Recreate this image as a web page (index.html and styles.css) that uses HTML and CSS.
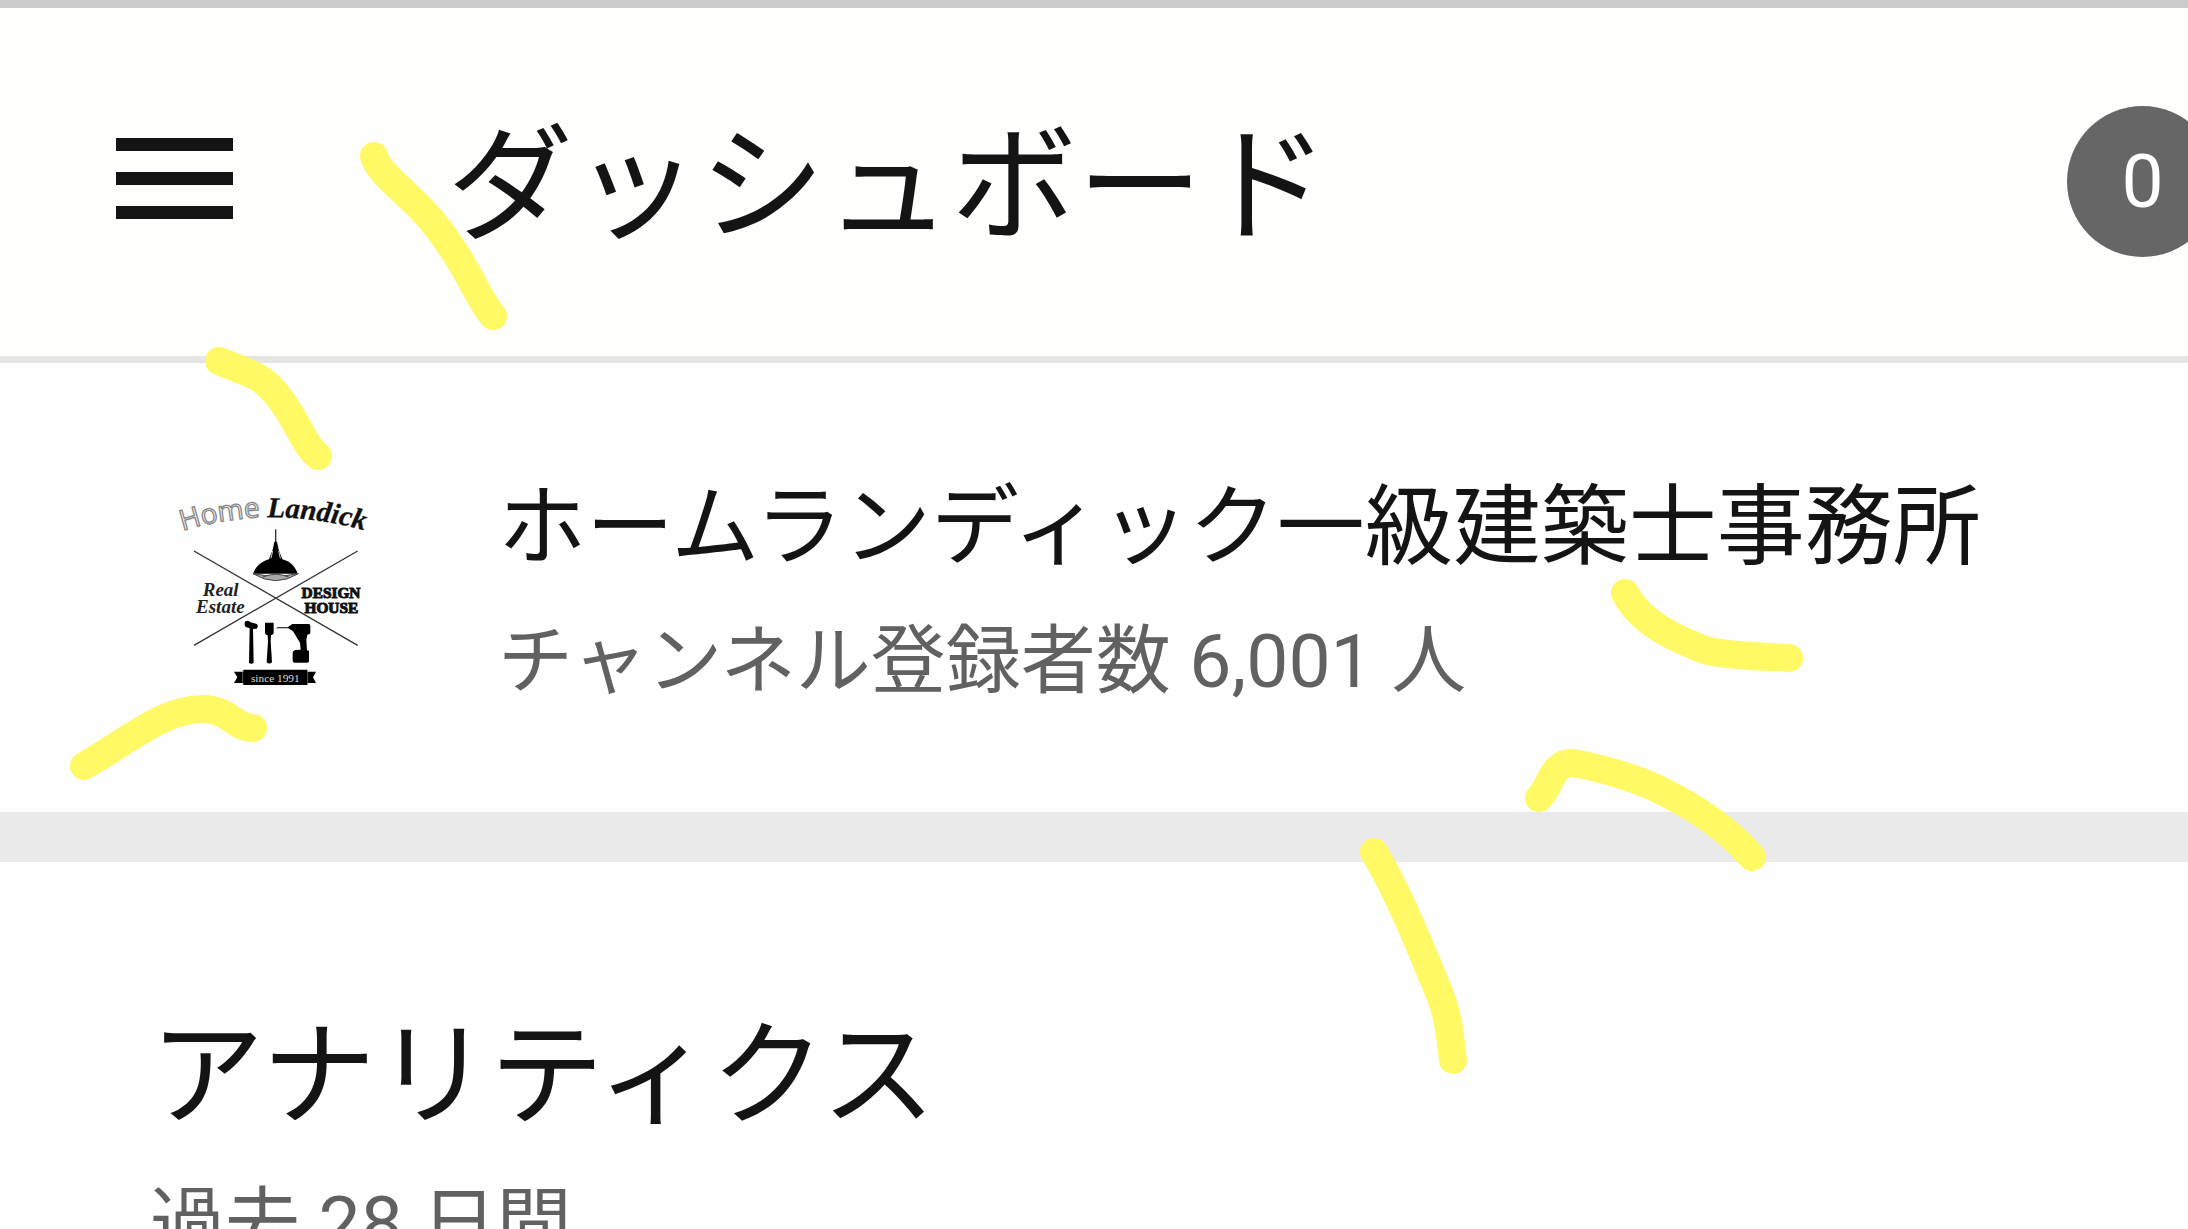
FILE: index.html
```
<!DOCTYPE html>
<html lang="ja">
<head>
    <meta charset="UTF-8">
    <meta name="viewport" content="width=device-width, initial-scale=1.0">
    <title>ダッシュボード</title>
    <link rel="stylesheet" href="styles.css">
</head>
<body>
    <header class="header">
        <button class="menu" aria-label="メニュー">
            <span class="bar"></span>
            <span class="bar"></span>
            <span class="bar"></span>
        </button>
        <h1 class="title">ダッシュボード</h1>
        <button class="badge">0</button>
    </header>

    <main>
        <section class="channel">
            <svg class="logo" viewBox="0 0 690 738" role="img" aria-label="Home Landick">
                <defs>
                    <path id="homeArc" d="M68 180 Q180 143 320 138"/>
                    <path id="landickArc" d="M322 139 Q470 136 650 188"/>
                </defs>
                <text class="logo-home"><textPath href="#homeArc">Home</textPath></text>
                <text class="logo-landick"><textPath href="#landickArc">Landick</textPath></text>

                <!-- cross -->
                <path class="line" d="M102 240 L593 523 M593 240 L102 523"/>

                <!-- lamp -->
                <path class="line" d="M347 175 V225"/>
                <path d="M343 212 h8 l5 24 11 29 c24 6 39 22 46 43 h-134 c8 -21 24 -36 48 -43 l11 -29z"/>
                <path class="lamp-gap" d="M338 240 l-5 22 M356 240 l5 22"/>
                <path class="lamp-rim" d="M279 308 Q347 350 415 308 Q347 322 279 308z"/>
                <path class="lamp-rim" d="M308 318 Q347 302 386 318"/>

                <text class="logo-script" x="182" y="374">Real</text>
                <text class="logo-script" x="181" y="426">Estate</text>
                <text class="logo-block" x="513" y="382">DESIGN</text>
                <text class="logo-block" x="514" y="425">HOUSE</text>

                <!-- hammer, brush, drill -->
                <path d="M256 451 q8 -5 16 3 l19 5 q5 8 -1 14 l-11 1 2 102 q-7 5 -14 0 l2 -104 -12 -4 q-6 -8 -1 -17z"/>
                <path d="M315 455 h26 v32 q-2 5 -8 6 l-1 18 4 63 q-8 7 -16 0 l4 -63 -1 -18 q-7 -1 -8 -6z"/>
                <path d="M353 469 h30 l14 -10 h49 q5 0 5 6 v20 q0 5 -9 6 l-3 16 2 30 6 3 v30 q0 5 -6 5 h-37 q-6 0 -6 -6 v-23 q0 -7 8 -9 l16 -1 -2 -21 -21 -34 -14 -9 h-37z"/>

                <!-- ribbon -->
                <path d="M222 602 h28 v-6 h192 v6 h26 l-9 17 9 17 h-26 v6 h-192 v-6 h-28 l10 -17z"/>
                <path class="ribbon-fold" d="M248 598 v42 M443 598 v42"/>
                <text class="logo-since" x="346" y="632">since 1991</text>
            </svg>
            <div class="channel-text">
                <h2 class="channel-name">ホームランディック一級建築士事務所</h2>
                <p class="sub">チャンネル登録者数 6,001 人</p>
            </div>
        </section>

        <section class="analytics">
            <h2 class="analytics-title">アナリティクス</h2>
            <p class="sub">過去 28 日間</p>
        </section>
    </main>

    <!-- marker strokes drawn over the page -->
    <svg class="marker" viewBox="0 0 2188 1229" aria-hidden="true">
        <path d="M374 156 C380 176 408 192 433 222 C467 264 476 296 493 316"/>
        <path d="M219 361 C248 373 262 375 278 396 C302 428 302 442 318 456"/>
        <path d="M84 766 C135 736 165 709 203 709 C229 709 236 729 253 728"/>
        <path d="M1625 593 C1641 624 1678 640 1708 651 C1730 656 1760 656 1789 658"/>
        <path d="M1539 798 C1552 784 1552 762 1573 763 C1603 768 1640 780 1660 790 C1705 812 1733 835 1752 857"/>
        <path d="M1374 852 C1398 892 1420 946 1440 995 C1449 1018 1450 1037 1453 1060"/>
    </svg>
</body>
</html>
```
FILE: styles.css
```
* {
    box-sizing: border-box;
}
body {
    position: relative;
    height: 100vh;
    margin: 0;
    overflow: hidden;
    background-color: #fefefe;
    color: #141414;
    font-family: Roboto, "Noto Sans CJK JP", sans-serif;
}
h1, h2, p {
    margin: 0;
    font-weight: 400;
    white-space: nowrap;
}
button {
    padding: 0;
    border: none;
    font-family: inherit;
    cursor: pointer;
}
.header {
    display: flex;
    align-items: center;
    height: 363px;
    padding-bottom: 2px;
    padding-left: 116px;
    overflow: hidden;
    background-color: #fefefd;
    border-top: 8px solid #cbcbcb;
    border-bottom: 7px solid #e5e6e3;
}
.menu {
    display: flex;
    flex-direction: column;
    gap: 21px;
    width: 117px;
    padding-bottom: 6px;
    background: none;
}
.bar {
    height: 13px;
    background-color: #141414;
}
.title {
    margin-left: 214px;
    padding-top: 12px;
    font-size: 126px;
    line-height: 148px;
}
.badge {
    flex-shrink: 0;
    width: 151px;
    height: 151px;
    margin-left: auto;
    margin-right: -30px;
    border-radius: 50%;
    background-color: #666;
    color: #fff;
    font-size: 75px;
}
.channel {
    display: flex;
    align-items: center;
    gap: 108px;
    padding: 97px 0 84px 160px;
    border-bottom: 50px solid #eaeaea;
}
.logo {
    flex-shrink: 0;
    width: 230px;
    height: 246px;
}
.channel-name {
    font-size: 88px;
    line-height: 134px;
}
.sub {
    color: #616161;
    font-size: 75px;
    line-height: 134px;
}
.analytics {
    padding: 146px 0 0 150px;
}
.analytics-title {
    margin-bottom: 12px;
    font-size: 114px;
    line-height: 136px;
}
.line {
    fill: none;
    stroke: #333;
    stroke-width: 4;
}
.lamp-gap {
    stroke: #ccc;
    stroke-width: 3;
}
.lamp-rim {
    fill: #aaa;
    stroke: #444;
    stroke-width: 3;
}
.ribbon-fold {
    stroke: #888;
    stroke-width: 2;
}
.logo-home {
    fill: #fff;
    stroke: #888;
    stroke-width: 4;
    font: 84px "Open Sans", sans-serif;
}
.logo-landick {
    fill: #111;
    stroke: #111;
    stroke-width: 1;
    font: italic bold 87px "Liberation Serif", serif;
}
.logo-script {
    fill: #222;
    text-anchor: middle;
    font: italic bold 57px "Liberation Serif", serif;
}
.logo-block {
    fill: #111;
    stroke: #111;
    stroke-width: 3;
    text-anchor: middle;
    font: bold 46px "Liberation Serif", serif;
}
.logo-since {
    fill: #ddd;
    text-anchor: middle;
    font: 34px "Liberation Serif", serif;
}
.marker {
    position: absolute;
    top: 0;
    left: 0;
    width: 100%;
    fill: none;
    stroke: #fff966;
    stroke-width: 28;
    stroke-linecap: round;
    stroke-linejoin: round;
    pointer-events: none;
}
```
